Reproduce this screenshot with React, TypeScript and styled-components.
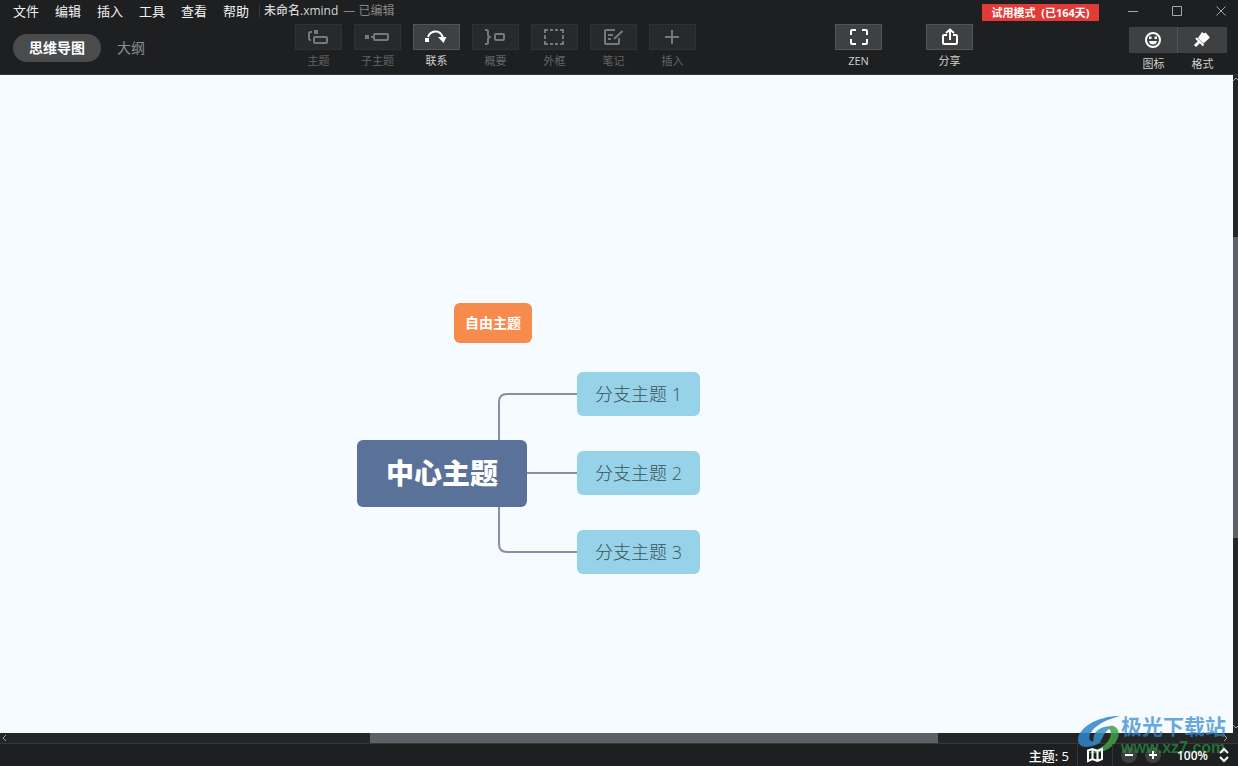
import React from "react";
import styled, { createGlobalStyle, css } from "styled-components";

const GlobalStyle = createGlobalStyle`
  *, *::before, *::after { box-sizing: border-box; }
  body {
    margin: 0;
    background: #1e1f21;
    font-family: "Open Sans", "Noto Sans CJK SC", sans-serif;
  }
  button, select, input { font-family: inherit; }
`;

const Page = styled.div`
  position: relative;
  display: flex;
  flex-direction: column;
  min-height: 100vh;
  background: #1e1f21;
  overflow: hidden;
`;

const Header = styled.header`
  border-bottom: 1px solid #34363a;
`;

const TitleRow = styled.div`
  display: flex;
  align-items: center;
  height: 24px;
  padding-left: 5px;
`;

const MenuBar = styled.nav`
  display: flex;
  height: 24px;
`;

const plainButton = css`
  border: 0;
  margin: 0;
  padding: 0;
  background: none;
  cursor: pointer;
`;

const MenuButton = styled.button`
  ${plainButton}
  width: 42px;
  height: 22px;
  font-size: 13px;
  line-height: 22px;
  color: #f2f2f2;
  white-space: nowrap;
`;

const DocTitle = styled.h1`
  display: flex;
  align-items: center;
  gap: 5px;
  margin: 0 auto 2px 2px;
  padding-left: 4px;
  border-left: 1px solid #34363a;
  font-size: 12px;
  line-height: 14px;
  font-weight: 500;
  color: #d6d6d6;
  white-space: nowrap;
`;

const Edited = styled.span`
  font-weight: 400;
  color: #858688;
`;

const Trial = styled.button`
  ${plainButton}
  width: 117px;
  height: 17px;
  margin-right: 12px;
  background: #e13a37;
  color: #fff;
  font-size: 11px;
  line-height: 17px;
  font-weight: 700;
  white-space: pre;
`;

const WindowButton = styled.button`
  ${plainButton}
  display: flex;
  align-items: center;
  justify-content: center;
  width: 44px;
  height: 22px;
  color: #a6a7a8;
  &:last-child { width: 39px; padding-left: 4px; }
`;

const ToolRow = styled.div`
  display: flex;
  height: 50px;
  padding: 0 11px 0 13px;
`;

const ViewTabs = styled.div`
  display: flex;
  align-items: center;
  width: 282px;
  height: 28px;
  margin-top: 10px;
`;

const ViewTab = styled.button<{ $active?: boolean }>`
  ${plainButton}
  height: 28px;
  padding: 0 16px;
  border-radius: 14px;
  font-size: 14px;
  line-height: 28px;
  color: ${(p) => (p.$active ? "#fff" : "#8c8d8f")};
  background: ${(p) => (p.$active ? "#4a4b4d" : "transparent")};
  font-weight: ${(p) => (p.$active ? 700 : 400)};
  white-space: nowrap;
`;

const ToolGroup = styled.div<{ $gap: number }>`
  display: flex;
  gap: ${(p) => p.$gap}px;
`;

const Spacer = styled.div<{ $grow: number }>`
  flex: ${(p) => p.$grow} 1 0;
`;

const ToolButton = styled.button<{ $dim?: boolean }>`
  ${plainButton}
  display: flex;
  flex-direction: column;
  gap: 2px;
  width: 47px;
  font-size: 11px;
  line-height: 18px;
  text-align: center;
  color: ${(p) => (p.$dim ? "#646567" : "#d0d0d0")};
  white-space: nowrap;
`;

const IconPlate = styled.span<{ $dim?: boolean }>`
  display: flex;
  align-items: center;
  justify-content: center;
  height: 26px;
  border: 1px solid ${(p) => (p.$dim ? "#303133" : "#545557")};
  background: ${(p) => (p.$dim ? "#28292b" : "#3f4042")};
  color: ${(p) => (p.$dim ? "#77787a" : "#fff")};
`;

const PanelGroup = styled.div`
  display: flex;
  margin-top: 3px;
`;

const PanelButton = styled(ToolButton)`
  width: 49px;
`;

const PanelPlate = styled(IconPlate)`
  border: 0;
  ${PanelButton}:first-child & { border-right: 1px solid #545557; }
`;

const Workspace = styled.div`
  flex: 1;
  display: flex;
`;

const Canvas = styled.main`
  position: relative;
  flex: 1;
  min-height: 600px;
  background: #f5fbff;
  overflow: hidden;
`;

const Links = styled.svg`
  position: absolute;
  left: 0;
  top: 0;
`;

const nodeKinds = {
  root: css`
    width: 170px;
    height: 67px;
    padding-bottom: 3px;
    background: #5a7199;
    color: #fff;
    font-size: 28px;
    font-weight: 800;
  `,
  branch: css`
    width: 123px;
    height: 44px;
    padding-bottom: 3px;
    background: #97d3e8;
    color: #3d505a;
    font-size: 18px;
    font-weight: 300;
  `,
  free: css`
    width: 78px;
    height: 40px;
    padding-bottom: 2px;
    background: #f78b4b;
    color: #fff;
    font-size: 14px;
    font-weight: 700;
  `,
};

const Node = styled.div<{ $kind: keyof typeof nodeKinds; $x: number; $y: number }>`
  position: absolute;
  left: ${(p) => p.$x}px;
  top: ${(p) => p.$y}px;
  display: flex;
  align-items: center;
  justify-content: center;
  border-radius: 6px;
  white-space: nowrap;
  ${(p) => nodeKinds[p.$kind]}
`;

const VTrack = styled.div`
  display: flex;
  flex-direction: column;
  align-items: center;
  width: 5px;
  background: #232527;
  color: #a0a1a3;
  overflow: hidden;
`;

const HTrack = styled.div`
  display: flex;
  height: 10px;
  padding-right: 5px;
  background: #232527;
  color: #a0a1a3;
`;

const TrackPart = styled.div<{ $grow: number; $end?: boolean }>`
  display: flex;
  flex: ${(p) => p.$grow} 1 0;
  align-items: ${(p) => (p.$end ? "flex-end" : "flex-start")};
  justify-content: ${(p) => (p.$end ? "flex-end" : "flex-start")};
`;

const Thumb = styled.div<{ $grow: number }>`
  flex: ${(p) => p.$grow} 1 0;
  align-self: stretch;
  background: #5d6064;
`;

const StatusBar = styled.footer`
  display: flex;
  align-items: center;
  justify-content: flex-end;
  height: 23px;
  padding-right: 8px;
  border-top: 1px solid #36383b;
  font-size: 13px;
  font-weight: 500;
  color: #fff;
`;

const Count = styled.span`
  padding-right: 8px;
  white-space: nowrap;
`;

const MapButton = styled.button`
  ${plainButton}
  position: relative;
  z-index: 1;
  display: flex;
  align-items: center;
  justify-content: center;
  width: 36px;
  height: 22px;
  border: solid #333538;
  border-width: 0 1px;
  color: #fff;
`;

const ZoomButton = styled.button`
  ${plainButton}
  display: flex;
  align-items: center;
  justify-content: center;
  width: 16px;
  height: 16px;
  margin-left: 8px;
  border-radius: 8px;
  background: #3c3e40;
  color: #fff;
  & + & { margin-right: 16px; }
`;

const ZoomValue = styled.button`
  ${plainButton}
  position: relative;
  z-index: 1;
  display: flex;
  align-items: center;
  justify-content: space-between;
  width: 53px;
  color: #fff;
  font-size: 12px;
  font-weight: 600;
`;

const Watermark = styled.div`
  position: absolute;
  right: 10px;
  bottom: 8px;
  display: flex;
  pointer-events: none;
`;

const WatermarkLogo = styled.svg`
  opacity: 0.85;
`;

const WatermarkText = styled.div`
  display: flex;
  flex-direction: column;
  width: 107px;
  font-size: 21px;
  line-height: 24px;
  font-weight: 700;
  color: rgba(50, 135, 210, 0.72);
  white-space: nowrap;
`;

const WatermarkUrl = styled.span`
  font-family: "Liberation Sans", sans-serif;
  font-size: 16px;
  line-height: 20px;
  color: rgba(38, 150, 66, 0.7);
`;

type IconProps = { children: React.ReactNode; w?: number; h?: number; sw?: number };
const Icon = ({ children, w = 23, h = 20, sw = 2 }: IconProps) => (
  <svg width={w} height={h} viewBox={`0 0 ${w} ${h}`} fill="none" stroke="currentColor" strokeWidth={sw} aria-hidden="true">
    {children}
  </svg>
);

const dot = { fill: "currentColor", stroke: "none" };

const icons = {
  topic: (
    <Icon>
      <path d="M5 5H3.500Q2 5 2 6.500V11.500Q2 13 3.500 13H4" />
      <rect x="7" y="3" width="4" height="4" {...dot} />
      <rect x="7" y="10" width="13" height="6" rx="1" />
    </Icon>
  ),
  sub: (
    <Icon w={25}>
      <rect x="0" y="8" width="4" height="4" {...dot} />
      <path d="M6 10H9" />
      <rect x="9" y="7" width="14" height="6" rx="1" />
    </Icon>
  ),
  relation: (
    <Icon>
      <path d="M3 10C5 4 15 1 18 11" />
      <rect x="0" y="11" width="4" height="4" {...dot} />
      <path d="M13 10H21.500L18.500 16Z" {...dot} />
    </Icon>
  ),
  summary: (
    <Icon>
      <path d="M1 3H2.500Q4 3 4 4.500V8.500L6 10L4 11.500V15.500Q4 17 2.500 17H1" />
      <rect x="11" y="7" width="9" height="6" rx="1" />
    </Icon>
  ),
  boundary: (
    <Icon>
      <path d="M2 6V3H5M17 3H20V6M20 14V17H17M5 17H2V14M7 3H10M12 3H15M7 17H10M12 17H15M2 8V12M20 8V12" />
    </Icon>
  ),
  note: (
    <Icon>
      <path d="M13 3H4Q3 3 3 4V16Q3 17 4 17H16Q17 17 17 16V11M6 8H11M6 12H9" />
      <path d="M12 12L20.500 4" />
    </Icon>
  ),
  insert: (
    <Icon>
      <path d="M11 3V17M4 10H18" />
    </Icon>
  ),
  zen: (
    <Icon>
      <path d="M4 8V4Q4 3 5 3H9M15 3H19Q20 3 20 4V8M20 12V16Q20 17 19 17H15M9 17H5Q4 17 4 16V12" />
    </Icon>
  ),
  share: (
    <Icon>
      <path d="M9 8H6Q5 8 5 9V16Q5 17 6 17H18Q19 17 19 16V9Q19 8 18 8H15M12 13V2.500M8 6L12 2.500L16 6" />
    </Icon>
  ),
  face: (
    <Icon w={22}>
      <circle cx="11" cy="10" r="7" />
      <path d="M7 6.500H9.500V9H7ZM12.500 6.500H15V9H12.500ZM7 11H15Q14.500 14.500 11 14.500Q7.500 14.500 7 11Z" {...dot} />
    </Icon>
  ),
  brush: (
    <Icon>
      <path d="M11 2L13 3.500L14.500 2.500L19 7.500L12.500 13.500L7 8Z" {...dot} />
      <path d="M5 8L12.500 15.500" />
      <path d="M8.500 11.500L4 16" strokeWidth="3" />
    </Icon>
  ),
};

const tools: { icon: keyof typeof icons; label: string; dim?: boolean }[] = [
  { icon: "topic", label: "主题", dim: true },
  { icon: "sub", label: "子主题", dim: true },
  { icon: "relation", label: "联系" },
  { icon: "summary", label: "概要", dim: true },
  { icon: "boundary", label: "外框", dim: true },
  { icon: "note", label: "笔记", dim: true },
  { icon: "insert", label: "插入", dim: true },
];

const Tool = ({ icon, label, dim }: { icon: keyof typeof icons; label: string; dim?: boolean }) => (
  <ToolButton $dim={dim}>
    <IconPlate $dim={dim}>{icons[icon]}</IconPlate>
    {label}
  </ToolButton>
);

const Panel = ({ icon, label }: { icon: keyof typeof icons; label: string }) => (
  <PanelButton>
    <PanelPlate>{icons[icon]}</PanelPlate>
    {label}
  </PanelButton>
);

export default function App() {
  return (
    <Page>
      <GlobalStyle />
      <Header>
        <TitleRow>
          <MenuBar>
            {["文件", "编辑", "插入", "工具", "查看", "帮助"].map((m) => (
              <MenuButton key={m}>{m}</MenuButton>
            ))}
          </MenuBar>
          <DocTitle>
            未命名.xmind <Edited>— 已编辑</Edited>
          </DocTitle>
          <Trial>试用模式  (已164天)</Trial>
          <WindowButton aria-label="最小化">
            <Icon w={12} h={12} sw={1}><path d="M1 5.500H11" /></Icon>
          </WindowButton>
          <WindowButton aria-label="最大化">
            <Icon w={12} h={12} sw={1}><path d="M1.500 0.500H10.500V9.500H1.500Z" /></Icon>
          </WindowButton>
          <WindowButton aria-label="关闭">
            <Icon w={12} h={12} sw={1}><path d="M1.500 0.500L10.500 9.500M10.500 0.500L1.500 9.500" /></Icon>
          </WindowButton>
        </TitleRow>
        <ToolRow>
          <ViewTabs>
            <ViewTab $active>思维导图</ViewTab>
            <ViewTab>大纲</ViewTab>
          </ViewTabs>
          <ToolGroup $gap={12}>
            {tools.map((t) => (
              <Tool key={t.label} {...t} />
            ))}
          </ToolGroup>
          <Spacer $grow={139} />
          <ToolGroup $gap={44}>
            <Tool icon="zen" label="ZEN" />
            <Tool icon="share" label="分享" />
          </ToolGroup>
          <Spacer $grow={156} />
          <PanelGroup>
            <Panel icon="face" label="图标" />
            <Panel icon="brush" label="格式" />
          </PanelGroup>
        </ToolRow>
      </Header>

      <Workspace>
        <Canvas>
          <Links width="720" height="520" fill="none" stroke="#8790a3" strokeWidth="2" aria-hidden="true">
            <path d="M499 398V327Q499 319 507 319H580M499 398V469Q499 477 507 477H580M499 398H580" />
          </Links>
          <Node $kind="free" $x={454} $y={228}>自由主题</Node>
          <Node $kind="root" $x={357} $y={365}>中心主题</Node>
          <Node $kind="branch" $x={577} $y={297}>分支主题 1</Node>
          <Node $kind="branch" $x={577} $y={376}>分支主题 2</Node>
          <Node $kind="branch" $x={577} $y={455}>分支主题 3</Node>
        </Canvas>
        <VTrack>
          <TrackPart $grow={162}>
            <Icon w={8} h={8} sw={1}><path d="M1 6L4 3L7 6" /></Icon>
          </TrackPart>
          <Thumb $grow={301} />
          <TrackPart $grow={195} $end>
            <Icon w={8} h={10} sw={1}><path d="M1 2L4 5L7 2" /></Icon>
          </TrackPart>
        </VTrack>
      </Workspace>
      <HTrack>
        <TrackPart $grow={370}>
          <Icon w={8} h={10} sw={1}><path d="M6 2L3 5L6 8" /></Icon>
        </TrackPart>
        <Thumb $grow={568} />
        <TrackPart $grow={295} $end>
          <Icon w={10} h={10} sw={1}><path d="M1 2L4 5L1 8" /></Icon>
        </TrackPart>
      </HTrack>

      <StatusBar>
        <Count>主题: 5</Count>
        <MapButton aria-label="导航图">
          <Icon w={18} h={16}>
            <path d="M2 3.500L6.500 2L11.500 4L16 2V12L11.500 14L6.500 12L2 14ZM6.500 2V12M11.500 4V14" />
          </Icon>
        </MapButton>
        <ZoomButton aria-label="缩小">
          <Icon w={10} h={10}><path d="M1 5H9" /></Icon>
        </ZoomButton>
        <ZoomButton aria-label="放大">
          <Icon w={10} h={10}><path d="M1 5H9M5 1V9" /></Icon>
        </ZoomButton>
        <ZoomValue>
          100%
          <Icon w={12} h={16}><path d="M2 6L6 2L10 6M2 10L6 14L10 10" /></Icon>
        </ZoomValue>
      </StatusBar>

      <Watermark aria-hidden="true">
        <WatermarkLogo width="44" height="44" viewBox="0 0 46 44">
          <path d="M45 1C26 1 8 9 2 21C-1 29 3 35 14 33C20 32 24 30 26 27C18 29 12 28 13 23C14 14 28 5 45 1Z" fill="#2f86cc" />
          <path d="M18 21C21 13 31 11 39 12C33 14 30 17 27 23C25 28 20 31 14 31C19 28 16 25 18 21Z" fill="#3c8fc4" />
          <path d="M36 11C44 12 46 21 40 29C34 37 22 41 11 40C22 37 30 32 34 25C36 20 36 15 32 13Z" fill="#3fa046" />
        </WatermarkLogo>
        <WatermarkText>
          极光下载站
          <WatermarkUrl>www.xz7.com</WatermarkUrl>
        </WatermarkText>
      </Watermark>
    </Page>
  );
}
